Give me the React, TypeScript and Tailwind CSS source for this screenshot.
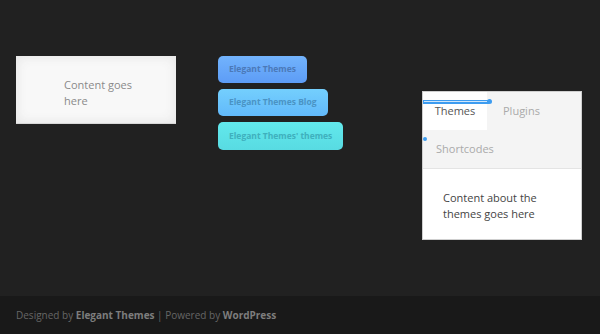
import React from "react";

export default function App() {
  const font = { fontFamily: '"Open Sans", "Noto Sans", sans-serif' };
  return (
    <div className="w-[600px] h-[334px] bg-[#212121] flex flex-col overflow-hidden" style={font}>
      <div className="h-[296px] flex items-start">
        <div className="ml-[16px] mt-[56px] w-[160px] h-[68px] bg-[#f8f8f8] shadow-[inset_0_0_12px_#e2e2e2] border-b border-[#d8d8d8] pl-[48px] pt-[21px]">
          <p className="w-[80px] text-[11px] leading-[16px] text-[#8a8a8a]">Content goes here</p>
        </div>

        <div className="ml-[42px] mt-[56px] w-[126px] flex flex-col items-start gap-[6px]">
          <div className="h-[27px] px-[11px] flex items-center rounded-[5px] bg-gradient-to-b from-[#72b3fc] to-[#5d9cf6] text-[8.5px] font-bold text-[#4b79b8]">
            Elegant Themes
          </div>
          <div className="h-[27px] px-[11px] flex items-center rounded-[5px] bg-gradient-to-b from-[#74cffd] to-[#62b9fb] text-[8.5px] font-bold text-[#4a93c4]">
            Elegant Themes Blog
          </div>
          <div className="h-[28px] px-[11px] flex items-center rounded-[5px] bg-gradient-to-b from-[#62e9ec] to-[#58dbe2] text-[8.5px] font-bold text-[#3fb0bd]">
            Elegant Themes' themes
          </div>
        </div>

        <div className="ml-[78px] mt-[91px] w-[160px] h-[149px] bg-white border border-[#cfcfcf] flex flex-col">
          <div className="relative bg-[#f4f4f4] border-b border-[#e4e4e4] flex flex-wrap">
            <div className="w-[64px] h-[38px] bg-white flex items-center justify-center text-[11px] text-[#555]">
              Themes
            </div>
            <div className="h-[38px] pl-[16px] flex items-center text-[11px] text-[#aaa]">Plugins</div>
            <div className="w-full h-[38px] pl-[13px] flex items-center text-[11px] text-[#aaa]">Shortcodes</div>
            <div className="absolute left-0 top-[8px] w-[66px] h-[4px] bg-[#3d9cf0] border-y border-[#3d9cf0]">
              <div className="h-[1px] mx-[1px] bg-[#cfe6fb]" />
            </div>
            <div className="absolute left-[64px] top-[7px] w-[5px] h-[5px] rounded-full bg-[#3d9cf0]" />
            <div className="absolute left-[0px] top-[45px] w-[4px] h-[4px] rounded-full bg-[#3d9cf0]" />
          </div>
          <div className="pl-[20px] pt-[21px]">
            <p className="w-[110px] text-[11px] leading-[16px] text-[#444]">Content about the themes goes here</p>
          </div>
        </div>
      </div>
      <div className="flex-1 bg-[#191919] flex items-center pl-[16px] text-[10px] text-[#666]">
        <span>
          Designed by <span className="font-bold text-[#7d7d7d]">Elegant Themes</span> | Powered by{" "}
          <span className="font-bold text-[#7d7d7d]">WordPress</span>
        </span>
      </div>
    </div>
  );
}
